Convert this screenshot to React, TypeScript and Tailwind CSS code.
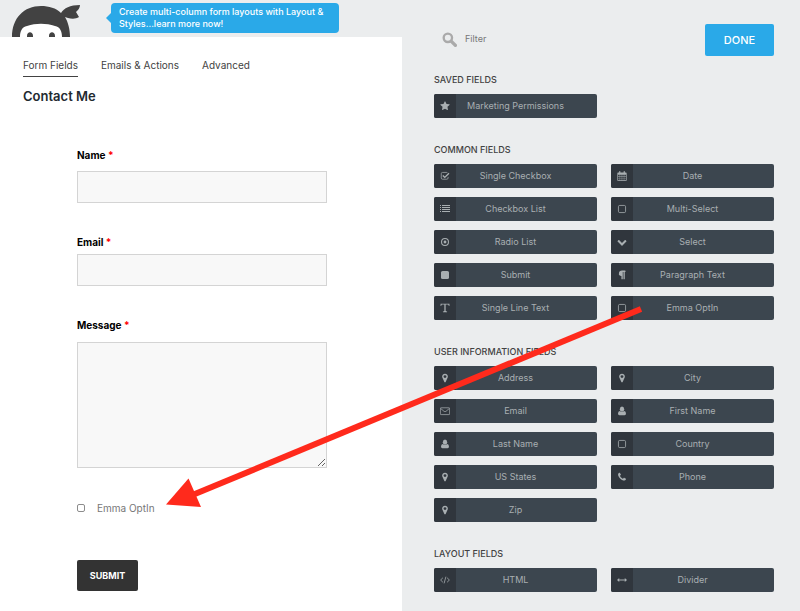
import React from "react";

interface FieldItem {
  label: string;
  icon: string;
}

interface FieldSection {
  title: string;
  fields: FieldItem[];
}

const sections: FieldSection[] = [
  {
    title: "SAVED FIELDS",
    fields: [{ label: "Marketing Permissions", icon: "star" }],
  },
  {
    title: "COMMON FIELDS",
    fields: [
      { label: "Single Checkbox", icon: "check" },
      { label: "Date", icon: "calendar" },
      { label: "Checkbox List", icon: "list" },
      { label: "Multi-Select", icon: "square" },
      { label: "Radio List", icon: "radio" },
      { label: "Select", icon: "chevron" },
      { label: "Submit", icon: "filled" },
      { label: "Paragraph Text", icon: "paragraph" },
      { label: "Single Line Text", icon: "text" },
      { label: "Emma OptIn", icon: "square" },
    ],
  },
  {
    title: "USER INFORMATION FIELDS",
    fields: [
      { label: "Address", icon: "marker" },
      { label: "City", icon: "marker" },
      { label: "Email", icon: "envelope" },
      { label: "First Name", icon: "user" },
      { label: "Last Name", icon: "user" },
      { label: "Country", icon: "square" },
      { label: "US States", icon: "marker" },
      { label: "Phone", icon: "phone" },
      { label: "Zip", icon: "marker" },
    ],
  },
  {
    title: "LAYOUT FIELDS",
    fields: [
      { label: "HTML", icon: "code" },
      { label: "Divider", icon: "arrows" },
    ],
  },
];

// all drawn on a 1792 grid
const icons: Record<string, React.ReactNode> = {
  star: (
    <path d="M1728 647q0 22-26 48l-363 354 86 500q1 7 1 20 0 21-10.5 35.5t-30.5 14.5q-19 0-40-12l-449-236-449 236q-22 12-40 12-21 0-31.5-14.5t-10.5-35.5q0-6 2-20l86-500-364-354q-25-27-25-48 0-37 56-46l502-73 225-455q19-41 49-41t49 41l225 455 502 73q56 9 56 46z" />
  ),
  marker: (
    <path d="M1152 640q0-106-75-181t-181-75-181 75-75 181 75 181 181 75 181-75 75-181zm256 0q0 109-33 179l-364 774q-16 33-47.5 52t-67.5 19-67.5-19-46.5-52l-365-774q-33-70-33-179 0-212 150-362t362-150 362 150 150 362z" />
  ),
  phone: (
    <path d="M1600 1240q0 27-10 70.5t-21 68.5q-21 50-122 106-94 51-186 51-27 0-53-3.5t-57.5-12.5-47-14.5-55.5-20.5-49-18q-98-35-175-83-127-79-264-216t-216-264q-48-77-83-175-3-9-18-49t-20.5-55.5-14.5-47-12.5-57.5-3.5-53q0-92 51-186 56-101 106-122 25-11 68.5-21t70.5-10q14 0 21 3 18 6 53 76 11 19 30 54t35 63.5 31 53.5q3 4 17.5 25t21.5 35.5 7 28.5q0 20-28.5 50t-62 55-62 53-28.5 46q0 9 5 22.5t8.5 20.5 14 24 11.5 19q76 137 174 235t235 174q2 1 19 11.5t24 14 20.5 8.5 22.5 5q18 0 46-28.5t53-62 55-62 50-28.5q14 0 28.5 7t35.5 21.5 25 17.5q25 15 53.5 31t63.5 35 54 30q70 35 76 53 3 7 3 21z" />
  ),
  user: (
    <g>
      <ellipse cx="896" cy="560" rx="390" ry="450" />
      <path d="M500 880q180 190 396 190t396-190q320 60 320 500 0 260-250 260H430q-250 0-250-260 0-440 320-500z" />
    </g>
  ),
  square: (
    <rect x="256" y="256" width="1280" height="1280" rx="220" fill="none" stroke="currentColor" strokeWidth="140" />
  ),
  filled: <rect x="179" y="179" width="1434" height="1434" rx="288" />,
  check: (
    <g fill="none" stroke="currentColor">
      <path d="M1450 1050v200q0 222-222 222H450q-222 0-222-222V480q0-224 222-224h778q50 0 90 15" strokeWidth="130" />
      <path d="M500 800l350 350 760-760" strokeWidth="240" />
    </g>
  ),
  list: (
    <path d="M0 179h179v179H0zM358 179h1434v179H358zM0 537h179v179H0zM358 537h1434v179H358zM0 896h179v179H0zM358 896h1434v179H358zM0 1254h179v179H0zM358 1254h1434v179H358z" />
  ),
  radio: (
    <g>
      <circle cx="896" cy="896" r="620" fill="none" stroke="currentColor" strokeWidth="190" />
      <circle cx="896" cy="896" r="256" />
    </g>
  ),
  calendar: (
    <path
      fillRule="evenodd"
      d="M192 256h192V100q0-100 110-100t110 100v156h584V100q0-100 110-100t110 100v156h192q128 0 128 128v1280q0 128-128 128H192q-128 0-128-128V384q0-128 128-128zm0 400v260h288V656zm370 0v260h288V656zm370 0v260h288V656zm370 0v260h298V656zM192 990v290h288V990zm370 0v290h288V990zm370 0v290h288V990zm370 0v290h298V990zM192 1360v304h288v-304zm370 0v304h288v-304zm370 0v304h288v-304zm370 0v304h298v-304z"
    />
  ),
  chevron: (
    <path d="M1683 808l-742 741q-19 19-45 19t-45-19L109 808q-19-19-19-45.500t19-45.500l166-165q19-19 45-19t45 19l531 531 531-531q19-19 45-19t45 19l166 165q19 19 19 45.500t-19 45.500z" />
  ),
  paragraph: (
    <path d="M1534 189v73q0 40-25 72t-55 32h-62v1190q0 100-80 100h-80q-70 0-70-100V366h-130v1190q0 100-80 100h-80q-80 0-80-100v-490q-220-10-370-140T352 560q0-200 150-325t400-125h552q80 0 80 79z" />
  ),
  text: (
    <path d="M100 130h1592v420h-110q-40-260-140-270h-430v1140q0 80 260 90v140H520v-140q260-10 260-90V280H350q-100 10-140 270H100z" />
  ),
  envelope: (
    <g fill="none" stroke="currentColor" strokeWidth="130">
      <rect x="65" y="320" width="1662" height="1220" rx="120" />
      <path d="M90 420l640 540q166 120 332 0l640-540" />
    </g>
  ),
  code: (
    <g fill="none" stroke="currentColor" strokeWidth="140">
      <path d="M520 500L110 900l410 400M1272 500l410 400-410 400M1060 300L732 1500" />
    </g>
  ),
  arrows: (
    <path d="M0 896l400-360v270h992V536l400 360-400 360V986H400v270z" />
  ),
};

const FieldIcon: React.FC<{ name: string }> = ({ name }) => {
  return (
    <svg className="h-[10px] w-[10px]" viewBox="0 0 1792 1792" fill="currentColor" aria-hidden="true">
      {icons[name]}
    </svg>
  );
};

const FieldButton: React.FC<FieldItem> = ({ label, icon }) => {
  return (
    <button className="flex h-6 overflow-hidden rounded-xs bg-[#3c464f] text-[#a9afb2]">
      <span className="flex h-6 w-[22px] items-center justify-center bg-[#30363d]">
        <FieldIcon name={icon} />
      </span>
      <span className="flex-1 pr-[22px] text-center text-[9px] leading-6">{label}</span>
    </button>
  );
};

const Required = () => <span className="text-[#ff0000]">*</span>;

const Logo = () => {
  return (
    <svg className="h-[37px] w-[70px]" viewBox="0 0 70 37" aria-hidden="true">
      <path
        fill="#424242"
        d="M0 37C0 18 12 6 29 6c8 0 15 2 20 7 3-5 9-8 19-8 0 3-2 5-4 7l3 5c-3 2-7 2-11 1l-3-1c3 5 5 12 5 20z"
      />
      <path fill="#fff" d="M8 37c0-6 2-10 7-11 9-3 19-3 28 0 5 1 7 5 7 11z" />
      <path fill="#424242" d="M15 37v-1c0-5 6-5 6 0v1zM37 37v-1c0-5 6-5 6 0v1z" />
    </svg>
  );
};

const App: React.FC = () => {
  return (
    <div className="relative grid min-h-screen grid-cols-[402fr_398fr] bg-[#ebedee] font-[Inter,sans-serif] text-[#424242]">
      <div className="flex flex-col">
        <header className="flex h-[37px] items-start pl-3">
          <Logo />
          <a
            href="#layout"
            className="relative mt-[3px] ml-[29px] h-[30px] w-[228px] rounded-sm bg-[#2aa9e8] px-2 py-[3px] text-[9px] leading-[12px] font-medium text-white"
          >
            <span className="absolute top-[10px] -left-[5px] border-y-[5px] border-r-[5px] border-y-transparent border-r-[#2aa9e8]" />
            Create multi-column form layouts with Layout &amp; Styles...learn more now!
          </a>
        </header>
        <main className="flex-1 bg-white px-[23px]">
          <nav className="flex gap-[23px] pt-5 text-[10px]">
            <a href="#fields" className="h-5 border-b border-[#424242] leading-4">
              Form Fields
            </a>
            <a href="#actions" className="leading-4">
              Emails &amp; Actions
            </a>
            <a href="#advanced" className="leading-4">
              Advanced
            </a>
          </nav>
          <h1 className="mt-[9px] text-[13px] leading-5 font-semibold text-[#222a30]">Contact Me</h1>
          <form className="ml-[54px] flex w-[250px] flex-col pt-[41px] text-[10px]">
            <label htmlFor="name" className="leading-4 font-bold text-black">
              Name <Required />
            </label>
            <input id="name" type="text" className="mt-2 h-8 border border-[#d4d4d4] bg-[#f8f8f8] px-2" />
            <label htmlFor="email" className="mt-[31px] leading-4 font-bold text-black">
              Email <Required />
            </label>
            <input id="email" type="email" className="mt-1 h-8 border border-[#d4d4d4] bg-[#f8f8f8] px-2" />
            <label htmlFor="message" className="mt-[31px] leading-4 font-bold text-black">
              Message <Required />
            </label>
            <textarea id="message" className="mt-[9px] h-[126px] border border-[#d4d4d4] bg-[#f8f8f8] px-2" />
            <div className="mt-8 flex items-center gap-3">
              <input
                id="optin"
                type="checkbox"
                className="h-2 w-2 appearance-none rounded-xs border border-[#8c8c8c] bg-white"
              />
              <label htmlFor="optin" className="leading-4 text-[#777]">
                Emma OptIn
              </label>
            </div>
            <button
              type="button"
              className="mt-11 h-[31px] w-[61px] rounded-xs bg-[#333] text-[9px] font-bold text-white"
            >
              SUBMIT
            </button>
          </form>
        </main>
      </div>

      <aside className="pr-[26px] pl-8">
        <div className="flex items-start justify-between pt-6">
          <div className="flex items-start gap-2 pt-[6px] pl-2">
            <svg
              className="mt-[2px] h-[15px] w-[15px] text-[#aaa]"
              viewBox="0 0 1792 1792"
              fill="none"
              stroke="currentColor"
              aria-hidden="true"
            >
              <circle cx="700" cy="700" r="500" strokeWidth="280" />
              <path d="M1120 1120l480 480" strokeWidth="400" strokeLinecap="round" />
            </svg>
            <input
              type="search"
              aria-label="Filter"
              placeholder="Filter"
              className="h-4 w-40 bg-transparent text-[9px] outline-none placeholder:text-[#777]"
            />
          </div>
          <button className="h-8 w-[69px] rounded-xs bg-[#2aa9e8] text-[11px] font-medium text-white">DONE</button>
        </div>
        <div className="flex flex-col gap-6 pt-4">
          {sections.map((section) => (
            <section key={section.title}>
              <h2 className="text-[9px] leading-4 font-medium">{section.title}</h2>
              <div className="mt-1.5 grid grid-cols-2 gap-x-[14px] gap-y-[9px]">
                {section.fields.map((field) => (
                  <FieldButton key={field.label} label={field.label} icon={field.icon} />
                ))}
              </div>
            </section>
          ))}
        </div>
      </aside>

      <svg className="pointer-events-none absolute top-0 left-0 h-[611px] w-[800px]" viewBox="0 0 800 611" aria-hidden="true">
        <path d="M641 309L190 496" stroke="#ff2a1c" strokeWidth="6" />
        <path d="M166 504.500l22.500-26L201 507z" fill="#ff2a1c" />
      </svg>
    </div>
  );
};

export default App;
